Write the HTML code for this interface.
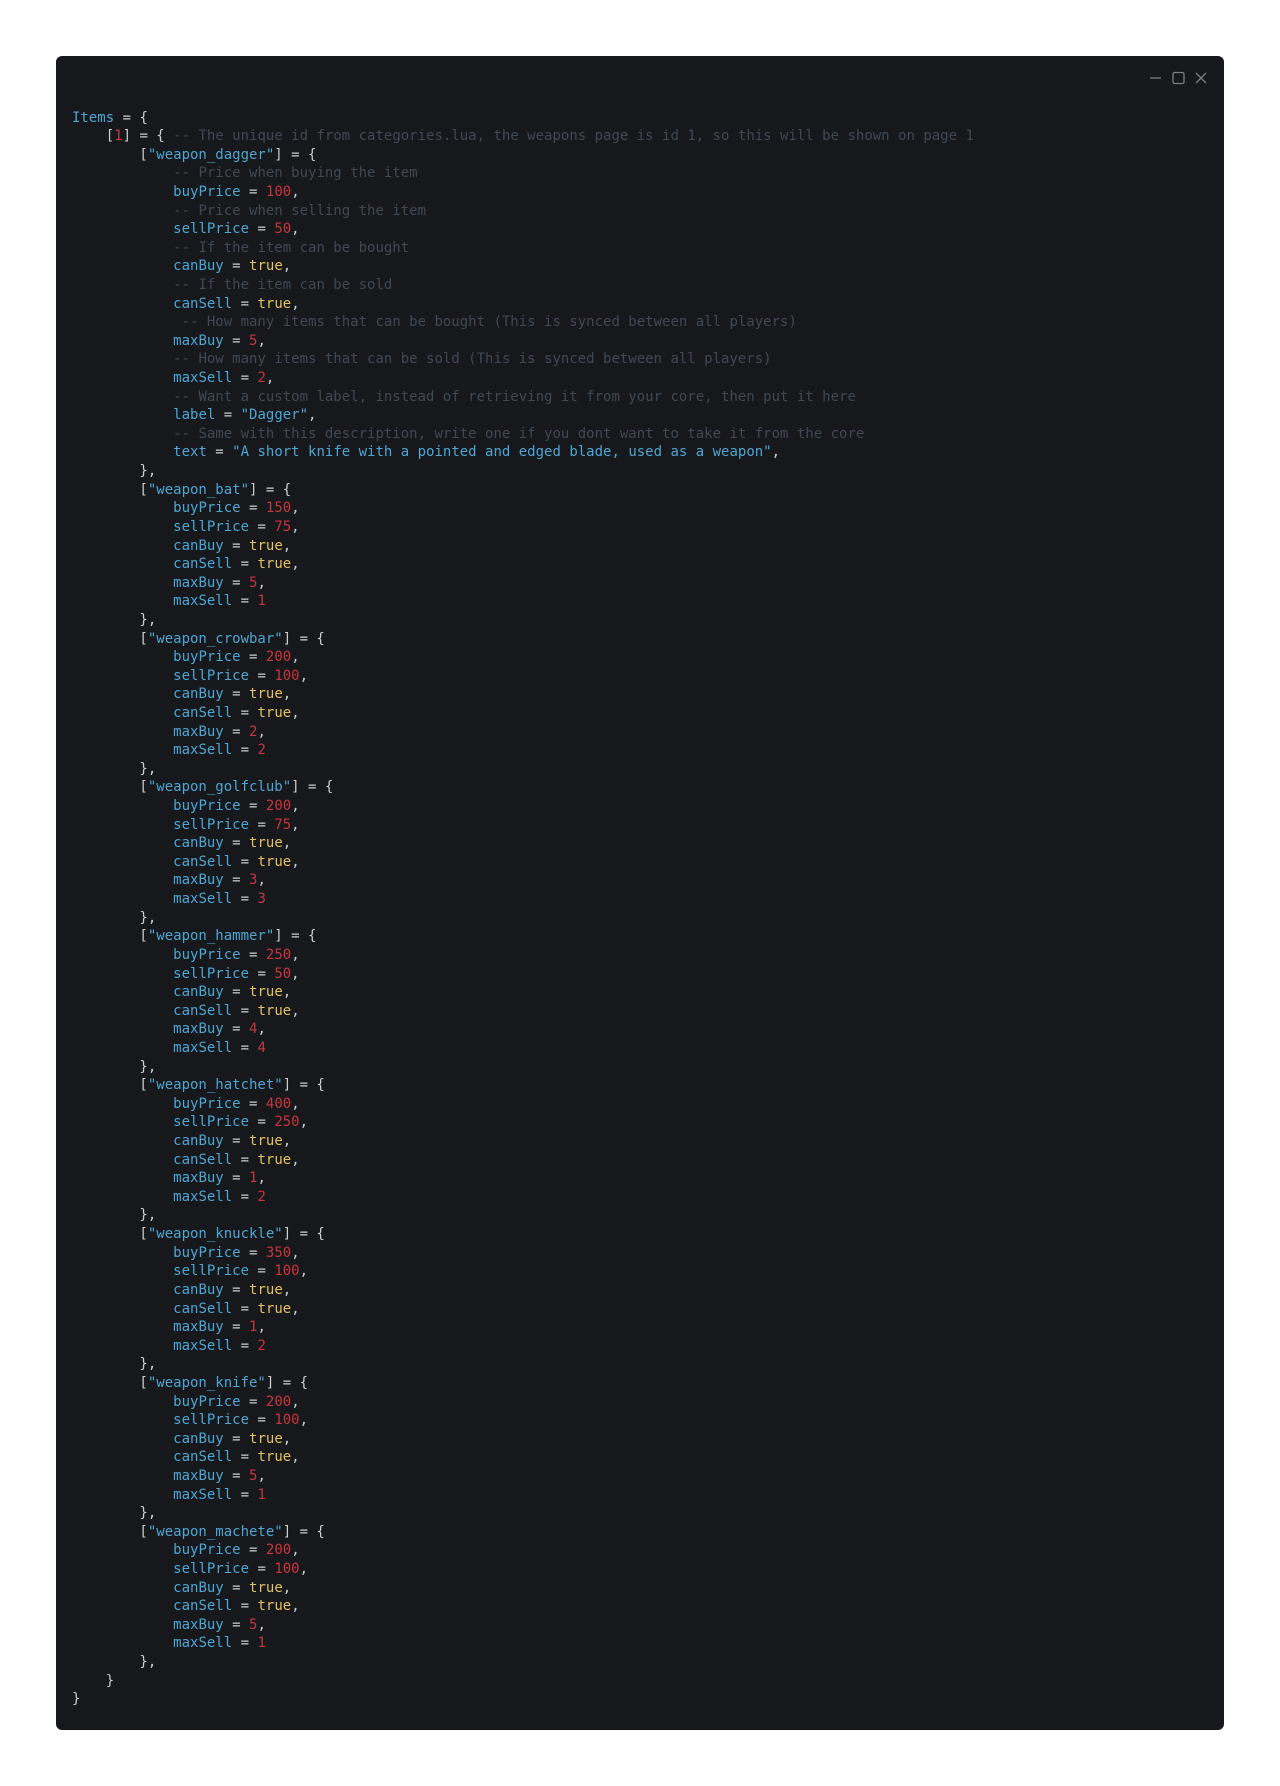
<!DOCTYPE html>
<html><head><meta charset="utf-8"><style>
html,body{margin:0;padding:0;background:#fff;width:1280px;height:1786px;overflow:hidden}
.win{position:absolute;left:56px;top:56px;width:1168px;height:1674px;background:#17181b;border-radius:6px}
pre{position:absolute;left:16px;top:52.5px;margin:0;font-family:"DejaVu Sans Mono","Liberation Mono",monospace;font-size:14px;line-height:18.61px;color:#c9cdd2}
.k{color:#4ea6d4}.n{color:#c8353d}.b{color:#e2c065}.c{color:#3f4954}
.ic{position:absolute;top:14px}
</style></head><body>
<div class="win">
<svg class="ic" style="left:1092px" width="60" height="16" viewBox="0 0 60 16" fill="none" stroke="#7a7d82" stroke-width="1.3">
<line x1="2" y1="8" x2="13" y2="8"/><rect x="25" y="2.5" width="11" height="11" rx="1.5"/><path d="M48 3l10 10M58 3l-10 10"/></svg>
<pre><span class="k">Items</span> = {
    [<span class="n">1</span>] = { <span class="c">-- The unique id from categories.lua, the weapons page is id 1, so this will be shown on page 1</span>
        [<span class="k">"weapon_dagger"</span>] = {
            <span class="c">-- Price when buying the item</span>
            <span class="k">buyPrice</span> = <span class="n">100</span>,
            <span class="c">-- Price when selling the item</span>
            <span class="k">sellPrice</span> = <span class="n">50</span>,
            <span class="c">-- If the item can be bought</span>
            <span class="k">canBuy</span> = <span class="b">true</span>,
            <span class="c">-- If the item can be sold</span>
            <span class="k">canSell</span> = <span class="b">true</span>,
             <span class="c">-- How many items that can be bought (This is synced between all players)</span>
            <span class="k">maxBuy</span> = <span class="n">5</span>,
            <span class="c">-- How many items that can be sold (This is synced between all players)</span>
            <span class="k">maxSell</span> = <span class="n">2</span>,
            <span class="c">-- Want a custom label, instead of retrieving it from your core, then put it here</span>
            <span class="k">label</span> = <span class="k">"Dagger"</span>,
            <span class="c">-- Same with this description, write one if you dont want to take it from the core</span>
            <span class="k">text</span> = <span class="k">"A short knife with a pointed and edged blade, used as a weapon"</span>,
        },
        [<span class="k">"weapon_bat"</span>] = {
            <span class="k">buyPrice</span> = <span class="n">150</span>,
            <span class="k">sellPrice</span> = <span class="n">75</span>,
            <span class="k">canBuy</span> = <span class="b">true</span>,
            <span class="k">canSell</span> = <span class="b">true</span>,
            <span class="k">maxBuy</span> = <span class="n">5</span>,
            <span class="k">maxSell</span> = <span class="n">1</span>
        },
        [<span class="k">"weapon_crowbar"</span>] = {
            <span class="k">buyPrice</span> = <span class="n">200</span>,
            <span class="k">sellPrice</span> = <span class="n">100</span>,
            <span class="k">canBuy</span> = <span class="b">true</span>,
            <span class="k">canSell</span> = <span class="b">true</span>,
            <span class="k">maxBuy</span> = <span class="n">2</span>,
            <span class="k">maxSell</span> = <span class="n">2</span>
        },
        [<span class="k">"weapon_golfclub"</span>] = {
            <span class="k">buyPrice</span> = <span class="n">200</span>,
            <span class="k">sellPrice</span> = <span class="n">75</span>,
            <span class="k">canBuy</span> = <span class="b">true</span>,
            <span class="k">canSell</span> = <span class="b">true</span>,
            <span class="k">maxBuy</span> = <span class="n">3</span>,
            <span class="k">maxSell</span> = <span class="n">3</span>
        },
        [<span class="k">"weapon_hammer"</span>] = {
            <span class="k">buyPrice</span> = <span class="n">250</span>,
            <span class="k">sellPrice</span> = <span class="n">50</span>,
            <span class="k">canBuy</span> = <span class="b">true</span>,
            <span class="k">canSell</span> = <span class="b">true</span>,
            <span class="k">maxBuy</span> = <span class="n">4</span>,
            <span class="k">maxSell</span> = <span class="n">4</span>
        },
        [<span class="k">"weapon_hatchet"</span>] = {
            <span class="k">buyPrice</span> = <span class="n">400</span>,
            <span class="k">sellPrice</span> = <span class="n">250</span>,
            <span class="k">canBuy</span> = <span class="b">true</span>,
            <span class="k">canSell</span> = <span class="b">true</span>,
            <span class="k">maxBuy</span> = <span class="n">1</span>,
            <span class="k">maxSell</span> = <span class="n">2</span>
        },
        [<span class="k">"weapon_knuckle"</span>] = {
            <span class="k">buyPrice</span> = <span class="n">350</span>,
            <span class="k">sellPrice</span> = <span class="n">100</span>,
            <span class="k">canBuy</span> = <span class="b">true</span>,
            <span class="k">canSell</span> = <span class="b">true</span>,
            <span class="k">maxBuy</span> = <span class="n">1</span>,
            <span class="k">maxSell</span> = <span class="n">2</span>
        },
        [<span class="k">"weapon_knife"</span>] = {
            <span class="k">buyPrice</span> = <span class="n">200</span>,
            <span class="k">sellPrice</span> = <span class="n">100</span>,
            <span class="k">canBuy</span> = <span class="b">true</span>,
            <span class="k">canSell</span> = <span class="b">true</span>,
            <span class="k">maxBuy</span> = <span class="n">5</span>,
            <span class="k">maxSell</span> = <span class="n">1</span>
        },
        [<span class="k">"weapon_machete"</span>] = {
            <span class="k">buyPrice</span> = <span class="n">200</span>,
            <span class="k">sellPrice</span> = <span class="n">100</span>,
            <span class="k">canBuy</span> = <span class="b">true</span>,
            <span class="k">canSell</span> = <span class="b">true</span>,
            <span class="k">maxBuy</span> = <span class="n">5</span>,
            <span class="k">maxSell</span> = <span class="n">1</span>
        },
    }
}</pre>
</div>
</body></html>
